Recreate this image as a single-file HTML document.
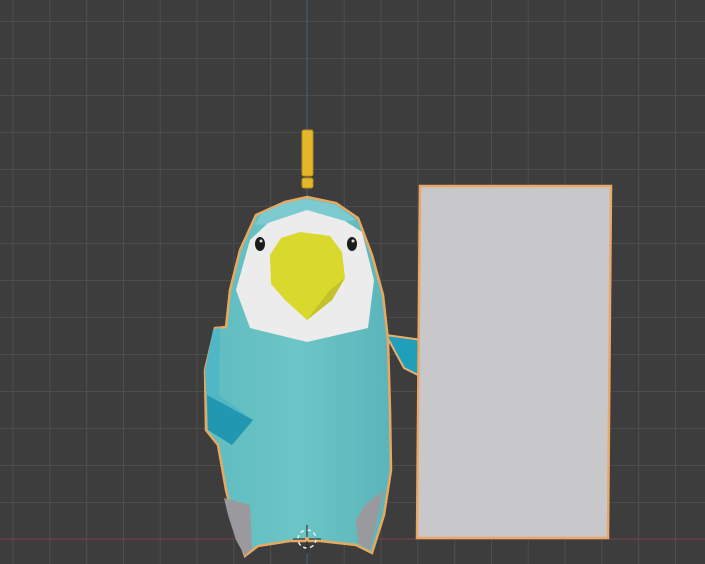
<!DOCTYPE html>
<html><head><style>
html,body{margin:0;padding:0;background:#3d3d3d;width:705px;height:564px;overflow:hidden}
svg{display:block}
</style></head><body>
<svg width="705" height="564" viewBox="0 0 705 564" xmlns="http://www.w3.org/2000/svg">
<defs>
<pattern id="g" x="12.6" y="21" width="36.8" height="37" patternUnits="userSpaceOnUse">
<path d="M0 0V37M0 0H36.8" stroke="#515151" stroke-width="1.6" fill="none"/>
</pattern>
<linearGradient id="body" x1="0" y1="0" x2="1" y2="0">
<stop offset="0" stop-color="#5fbcc0"/><stop offset="0.5" stop-color="#6cc5c6"/><stop offset="1" stop-color="#5ab5bb"/>
</linearGradient>
</defs>
<rect width="705" height="564" fill="#3d3d3d"/>
<rect width="705" height="564" fill="url(#g)"/>
<line x1="307" y1="0" x2="307" y2="564" stroke="#3d5a7a" stroke-width="1"/>
<line x1="0" y1="539" x2="705" y2="539" stroke="#7a3a44" stroke-width="1"/>
<rect x="302" y="130" width="11" height="46" rx="2" fill="#e3b72a" stroke="#b8901a"/>
<rect x="302" y="178" width="11" height="10" rx="2" fill="#e3b72a" stroke="#b8901a"/>
<polygon points="386,335 422,340 422,377 404,368" fill="#1f9fba" stroke="#e8b070" stroke-width="2"/>
<path d="M307,197 L336,203 L358,218 L372,255 L383,295 L388,340 L390,410 L391,470 L384,515 L372,553 L356,545 L320,541 L290,541 L258,546 L245,556 L236,530 L226,490 L218,445 L206,430 L205,370 L215,328 L226,327 L230,290 L240,250 L256,215 L285,202 Z" fill="url(#body)" stroke="#e8a860" stroke-width="2.5"/>
<polygon points="307,199 336,205 356,220 340,222 307,211 270,224 255,225 262,213 285,203" fill="#7ccbd0"/>
<polygon points="307,210 345,221 362,232 374,280 368,328 307,342 250,328 236,290 250,240 268,223" fill="#ececec"/>
<polygon points="300,232 330,236 342,252 345,278 332,300 307,320 285,300 271,284 270,255 281,238" fill="#d9d82c"/>
<polygon points="307,320 332,300 345,278 330,290" fill="#c4c22a"/>
<ellipse cx="260" cy="244" rx="5" ry="7" fill="#1c1c1c"/>
<ellipse cx="352" cy="244" rx="5" ry="7" fill="#1c1c1c"/>
<circle cx="261" cy="241" r="1.5" fill="#ddd"/><circle cx="353" cy="241" r="1.5" fill="#ddd"/>
<polygon points="213,330 220,327 219,395 253,420 232,445 208,428 205,370" fill="#4fb7c6"/>
<polygon points="207,395 253,420 232,445 208,430" fill="#2197b2"/>
<polygon points="224,498 250,505 252,548 245,556 236,540 228,515" fill="#9a9a9e"/>
<polygon points="384,490 378,515 370,550 358,543 356,520 365,505" fill="#9a9a9e"/>
<circle cx="307" cy="539" r="9" fill="none" stroke="#eee" stroke-width="1.5" stroke-dasharray="4 3"/>
<line x1="293" y1="539" x2="321" y2="539" stroke="#222"/>
<line x1="307" y1="525" x2="307" y2="553" stroke="#222"/>
<circle cx="307" cy="539" r="2" fill="#e8a860"/>
<polygon points="420,186 611,186 608,538 417,538" fill="#c8c8cb" stroke="#eaa868" stroke-width="2.5"/>
</svg>
</body></html>
